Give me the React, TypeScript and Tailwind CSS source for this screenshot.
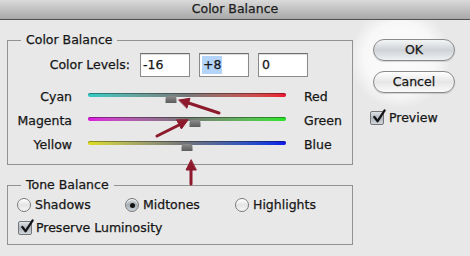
import React from "react";

const sliders = [
  { left: "Cyan", right: "Red", value: -16, track: "bg-gradient-to-r from-[#2ecbc4] via-[#767878] to-[#ec1230]" },
  { left: "Magenta", right: "Green", value: 8, track: "bg-gradient-to-r from-[#de12de] via-[#727872] to-[#22e622]" },
  { left: "Yellow", right: "Blue", value: 0, track: "bg-gradient-to-r from-[#dede12] via-[#72727a] to-[#1212ea]" },
];

function Radio({ checked }: { checked?: boolean }) {
  return (
    <span
      className={
        "flex h-[14px] w-[14px] items-center justify-center rounded-full border border-[#7a7a7a] shadow-[inset_0_1px_1px_rgba(255,255,255,0.9)] " +
        (checked
          ? "bg-gradient-to-b from-[#d6dadf] via-[#a4acb4] to-[#d0d6dc]"
          : "bg-gradient-to-b from-[#ffffff] via-[#e4e4e4] to-[#f6f6f6]")
      }
    >
      {checked && <span className="h-[5px] w-[5px] rounded-full bg-[#111]" />}
    </span>
  );
}

function Checkbox() {
  return (
    <span className="relative flex h-[14px] w-[14px] rounded-[2px] border border-[#767676] bg-gradient-to-b from-[#dfe3e7] via-[#aeb6be] to-[#cfd5db]">
      <svg viewBox="0 0 16 16" className="absolute -top-[3px] left-[1px] h-[15px] w-[15px]">
        <path d="M2.5 8.5 L6 13 L13.5 1.5" fill="none" stroke="#151515" strokeWidth="2.4" strokeLinecap="round" strokeLinejoin="round" />
      </svg>
    </span>
  );
}

function Button({ label, primary }: { label: string; primary?: boolean }) {
  return (
    <div
      className={
        "flex h-[22px] w-[82px] items-center justify-center rounded-full border border-[#8a8a8a] shadow-[0_1px_1px_rgba(0,0,0,0.15)] " +
        (primary
          ? "bg-gradient-to-b from-[#f4f5f6] via-[#cfd3d7] to-[#eef0f2]"
          : "bg-gradient-to-b from-[#ffffff] via-[#e6e6e6] to-[#fafafa]")
      }
    >
      {label}
    </div>
  );
}

export default function App() {
  return (
    <div className="relative h-[256px] w-[470px] overflow-hidden bg-[#e8e8e8] font-['DejaVu_Sans',sans-serif] text-[12.5px] leading-[16px] text-[#161616] [-webkit-text-stroke:0.25px_#161616]">
      {/* Title bar */}
      <div className="relative z-10 flex h-[20px] items-center justify-center border-b border-[#505050] bg-gradient-to-b from-[#dadada] to-[#a8a8a8] pb-[1px] text-[#1e1e1e]">
        Color Balance
      </div>

      {/* default button glow */}
      <div className="absolute left-[350px] top-[8px] h-[100px] w-[100px] rounded-full bg-[radial-gradient(circle,rgba(255,255,255,0.85)_0%,rgba(255,255,255,0.7)_50%,rgba(255,255,255,0)_72%)]" />

      <div className="relative flex">
        {/* Left column */}
        <div className="w-[353px] pl-[7px] pt-[12px]">
          <fieldset className="border border-[#929292] pb-[7px]">
            <legend className="ml-[13px] px-[5px]">Color Balance</legend>
            <div className="flex h-[24px] items-center pt-[5px] box-content">
              <span className="w-[122px] text-right">Color Levels:</span>
              <div className="ml-[10px] flex gap-[9px]">
                <div className="flex h-[24px] w-[50px] items-center border border-[#8a8a8a] border-t-[#6e6e6e] bg-white pl-[2px] shadow-[inset_0_1px_1px_rgba(0,0,0,0.15)]">
                  -16
                </div>
                <div className="flex h-[24px] w-[50px] items-center border border-[#8a8a8a] border-t-[#6e6e6e] bg-white pl-[2px] shadow-[inset_0_1px_1px_rgba(0,0,0,0.15)]">
                  <span className="bg-[#b4d4fc] px-[1px] leading-[18px]">+8</span>
                </div>
                <div className="flex h-[24px] w-[50px] items-center border border-[#8a8a8a] border-t-[#6e6e6e] bg-white pl-[3px] shadow-[inset_0_1px_1px_rgba(0,0,0,0.15)]">
                  0
                </div>
              </div>
            </div>
            <div className="mt-[8px] flex flex-col">
              {sliders.map((s) => (
                <div key={s.left} className="flex h-[24px] items-center">
                  <span className="w-[64px] text-right">{s.left}</span>
                  <div className="relative ml-[16px] h-[24px] w-[198px] pt-[8px]">
                    <div className={"h-[4px] rounded-full shadow-[inset_0_1px_0_rgba(0,0,0,0.35)] " + s.track} />
                    <div
                      className="absolute top-[11px] h-[7px] w-[11px] -translate-x-1/2 rounded-t-[3px] bg-gradient-to-b from-[#8c8c8c] to-[#5c5c5c]"
                      style={{ left: `${((s.value + 100) / 200) * 100}%` }}
                    />
                  </div>
                  <span className="ml-[18px]">{s.right}</span>
                </div>
              ))}
            </div>
          </fieldset>

          <fieldset className="mt-[12px] border border-[#929292] pb-[6px]">
            <legend className="ml-[13px] px-[5px]">Tone Balance</legend>
            <div className="flex h-[20px] items-center pl-[9px] pt-[2px] box-content">
              <div className="flex w-[108px] items-center gap-[4px]">
                <Radio />
                <span>Shadows</span>
              </div>
              <div className="flex w-[110px] items-center gap-[4px]">
                <Radio checked />
                <span>Midtones</span>
              </div>
              <div className="flex items-center gap-[4px]">
                <Radio />
                <span>Highlights</span>
              </div>
            </div>
            <div className="mt-[3px] flex h-[20px] items-center gap-[4px] pl-[10px]">
              <Checkbox />
              <span>Preserve Luminosity</span>
            </div>
          </fieldset>
        </div>

        {/* Right column */}
        <div className="flex flex-col pl-[17px] pt-[19px]">
          <div className="ml-[3px] flex flex-col gap-[10px]">
            <Button label="OK" primary />
            <Button label="Cancel" />
          </div>
          <div className="mt-[15px] flex h-[20px] items-center gap-[5px]">
            <Checkbox />
            <span>Preview</span>
          </div>
        </div>
      </div>

      {/* annotation arrows */}
      <svg className="pointer-events-none absolute inset-0" width="470" height="256" viewBox="0 0 470 256">
        <g stroke="#8c1a2c" strokeWidth="3" strokeLinecap="round" fill="#8c1a2c">
          <line x1="219" y1="113" x2="187" y2="102.5" />
          <polygon points="179,100 190,98.3 187,107.9" strokeWidth="1" />
          <line x1="157" y1="136" x2="181" y2="124" />
          <polygon points="188,120 181.4,129 176.8,120.2" strokeWidth="1" />
          <line x1="191" y1="184" x2="191" y2="168" />
          <polygon points="191,160 186,170 196,170" strokeWidth="1" />
        </g>
      </svg>
    </div>
  );
}
